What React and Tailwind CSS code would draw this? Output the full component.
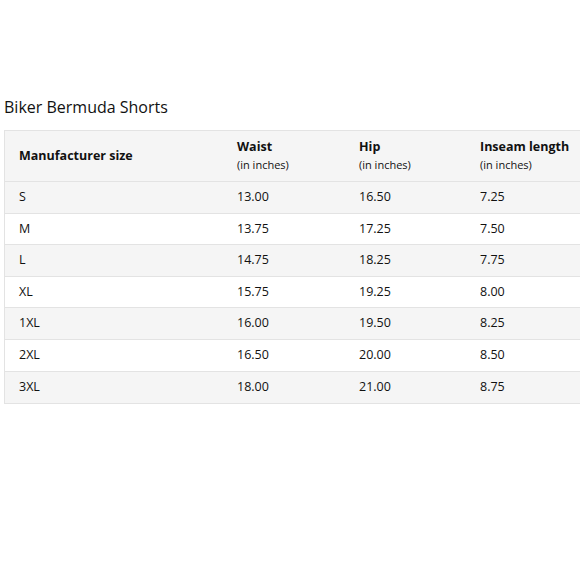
export default function App() {
  const rows = [
    ["S", "13.00", "16.50", "7.25"],
    ["M", "13.75", "17.25", "7.50"],
    ["L", "14.75", "18.25", "7.75"],
    ["XL", "15.75", "19.25", "8.00"],
    ["1XL", "16.00", "19.50", "8.25"],
    ["2XL", "16.50", "20.00", "8.50"],
    ["3XL", "18.00", "21.00", "8.75"],
  ];
  const cols = "grid grid-cols-[218px_122px_121px_1fr]";
  return (
    <div className="w-[580px] h-[580px] bg-white overflow-hidden text-[#111]" style={{ fontFamily: '"Open Sans", sans-serif' }}>
      <div className="pt-[95px] pl-[4px]">
        <div className="text-[16px] leading-[24px] h-[35px]">Biker Bermuda Shorts</div>
        <div className="border border-[#e3e3e3] border-r-0">
          <div className={`${cols} bg-[#f5f5f5] h-[51px] items-center border-b border-[#e3e3e3]`}>
            <div className="pl-[14px] font-bold text-[12.5px]">Manufacturer size</div>
            <div className="pl-[14px]">
              <div className="font-bold text-[12.5px] leading-[18px]">Waist</div>
              <div className="text-[11px] leading-[18px]">(in inches)</div>
            </div>
            <div className="pl-[14px]">
              <div className="font-bold text-[12.5px] leading-[18px]">Hip</div>
              <div className="text-[11px] leading-[18px]">(in inches)</div>
            </div>
            <div className="pl-[14px]">
              <div className="font-bold text-[12.5px] leading-[18px]">Inseam length</div>
              <div className="text-[11px] leading-[18px]">(in inches)</div>
            </div>
          </div>
          {rows.map((r, i) => (
            <div
              key={r[0]}
              className={`${cols} h-[31.6px] items-center text-[12.5px] ${i % 2 === 0 ? "bg-[#f5f5f5]" : "bg-white"} ${i < rows.length - 1 ? "border-b border-[#e3e3e3]" : ""}`}
            >
              {r.map((c, j) => (
                <div key={j} className="pl-[14px]">{c}</div>
              ))}
            </div>
          ))}
        </div>
      </div>
    </div>
  );
}
